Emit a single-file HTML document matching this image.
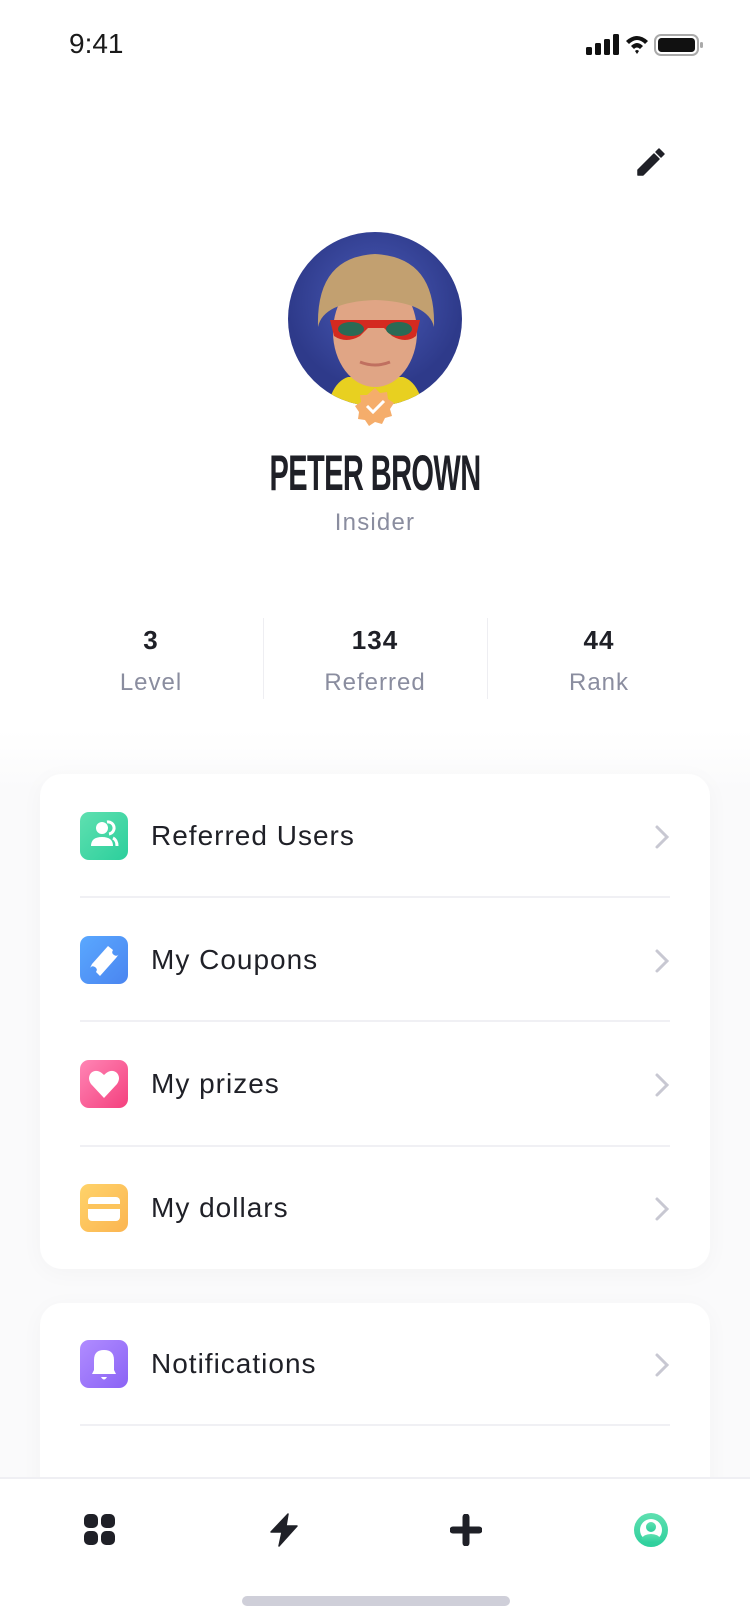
<!DOCTYPE html>
<html><head><meta charset="utf-8"><style>
*{margin:0;padding:0;box-sizing:border-box}
body{width:750px;height:1624px;overflow:hidden;position:relative;background:#fff;font-family:"Liberation Sans",sans-serif;color:#1f2027}
.abs{position:absolute}
.bg2{left:0;top:730px;width:750px;height:894px;background:linear-gradient(#fff,#fafafb 60px)}
.card{position:absolute;left:40px;width:670px;background:#fff;border-radius:22px;box-shadow:0 4px 24px rgba(0,0,0,0.03)}
.row{position:absolute;left:40px;width:670px;height:124px}
.ic{position:absolute;left:40px;top:38px;width:48px;height:48px;border-radius:9px}
.lbl{position:absolute;left:111px;top:0;line-height:124px;font-size:28px;letter-spacing:1px;color:#1f2027}
.chev{position:absolute;left:614px;top:50px}
.sep{position:absolute;left:80px;width:590px;height:2px;background:#f0f0f4}
.stat{position:absolute;width:200px;text-align:center}
.num{font-size:26px;font-weight:bold;top:625px;letter-spacing:1px}
.sl{font-size:24px;color:#8a8d9f;top:669px;letter-spacing:1px}
.vd{position:absolute;top:618px;width:1px;height:81px;background:#eeeef2}
</style></head><body>
<div class="abs bg2"></div>

<div class="abs" style="left:69px;top:28px;font-size:28px;color:#1a1a1a">9:41</div>
<svg class="abs" style="left:586px;top:33px" width="134" height="24" viewBox="0 0 134 24">
<rect x="0" y="14" width="6" height="8" rx="1.5" fill="#111"/><rect x="9" y="10" width="6" height="12" rx="1.5" fill="#111"/><rect x="18" y="6" width="6" height="16" rx="1.5" fill="#111"/><rect x="27" y="1" width="6" height="21" rx="1.5" fill="#111"/>
<path d="M40 8 Q51 -2 62 8 L59 11 Q51 3 43 11Z M45 13 Q51 7 57 13 L54 16 Q51 13 48 16Z M49 18 L51 21 L53 18 Q51 16 49 18Z" fill="#111"/>
<rect x="69" y="2" width="43" height="20" rx="6" fill="none" stroke="#aaa" stroke-width="2"/><rect x="72" y="5" width="37" height="14" rx="3.5" fill="#111"/><rect x="114" y="9" width="3" height="6" rx="1.5" fill="#aaa"/>
</svg>

<svg class="abs" style="left:634px;top:146px" width="32" height="32" viewBox="0 0 32 32"><path d="M4 24 L20 8 L25 13 L9 29 L4 29Z M22 6 L25 3 L30 8 L27 11Z" fill="#1f2027" stroke="#1f2027" stroke-width="1.5" stroke-linejoin="round"/></svg>

<svg class="abs" style="left:288px;top:232px" width="174" height="200" viewBox="0 0 174 200">
<defs><clipPath id="c"><circle cx="87" cy="87" r="87"/></clipPath><radialGradient id="bg" cx="50%" cy="40%"><stop offset="0" stop-color="#4a5bb8"/><stop offset="1" stop-color="#2e3a8a"/></radialGradient></defs>
<g clip-path="url(#c)">
<rect width="174" height="174" fill="url(#bg)"/>
<path d="M40 174 Q45 150 60 145 L115 145 Q130 150 135 174Z" fill="#e8d020"/>
<ellipse cx="87" cy="100" rx="42" ry="55" fill="#e0a585"/>
<path d="M30 95 Q28 25 87 22 Q148 25 146 95 Q140 70 87 68 Q35 70 30 95Z" fill="#c2a070"/>
<path d="M42 88 L132 88 L128 104 Q118 112 104 104 L96 96 L80 96 L72 104 Q58 112 46 104Z" fill="#d42a20"/>
<ellipse cx="63" cy="97" rx="13" ry="7" fill="#2a6a55"/><ellipse cx="111" cy="97" rx="13" ry="7" fill="#2a6a55"/>
<path d="M72 130 Q87 136 102 130" stroke="#c07060" stroke-width="3" fill="none"/>
</g>
<path d="M87 156 l5 5 7-1 1 7 6 4-4 6 2 7-7 2-3 6-7-2-6 4-4-6-7-1 1-7-4-6 6-4-1-7 7 0Z" fill="#f5ad6b"/>
<path d="M79 174 l6 6 11-11" stroke="#fff" stroke-width="3" fill="none"/>
</svg>

<div class="abs" style="left:0;width:750px;top:444px;text-align:center;font-size:50px;font-weight:bold;letter-spacing:-1px"><span style="display:inline-block;transform:scaleX(0.58)">PETER BROWN</span></div>
<div class="abs" style="left:0;width:750px;top:509px;text-align:center;font-size:24px;letter-spacing:1.2px;color:#8a8d9f">Insider</div>

<div class="stat num" style="left:51px">3</div><div class="stat sl" style="left:51px">Level</div>
<div class="stat num" style="left:275px">134</div><div class="stat sl" style="left:275px">Referred</div>
<div class="stat num" style="left:499px">44</div><div class="stat sl" style="left:499px">Rank</div>
<div class="vd" style="left:263px"></div><div class="vd" style="left:487px"></div>

<div class="card" style="top:774px;height:495px"></div>
<div class="card" style="top:1303px;height:300px"></div>

<div class="row" style="top:774px"><div class="ic" style="background:linear-gradient(135deg,#5fe0b0,#2ccf9c)"><svg width="48" height="48" viewBox="0 0 48 48"><circle cx="22" cy="16" r="6" fill="#fff"/><path d="M11 34 Q11 25 22 25 Q33 25 33 34Z" fill="#fff"/><path d="M27 10 A6 6 0 0 1 29 22 M33 26 Q37 28 37 34" stroke="#fff" stroke-width="3" fill="none"/></svg></div><div class="lbl">Referred Users</div><svg class="chev" width="16" height="26"><path d="M3 3 L13 13 L3 23" stroke="#c8c8d2" stroke-width="3" fill="none" stroke-linecap="round"/></svg></div>
<div class="sep" style="top:896px"></div>
<div class="row" style="top:898px"><div class="ic" style="background:linear-gradient(135deg,#5aa8ff,#4a85f0)"><svg width="48" height="48" viewBox="0 0 48 48"><path d="M12 28 L28 10 L33 14 Q31 17 34 19 Q37 21 39 18 L36 22 L20 40 L16 36 Q18 33 15 31 Q12 29 10 32Z" fill="#fff"/></svg></div><div class="lbl">My Coupons</div><svg class="chev" width="16" height="26"><path d="M3 3 L13 13 L3 23" stroke="#c8c8d2" stroke-width="3" fill="none" stroke-linecap="round"/></svg></div>
<div class="sep" style="top:1020px"></div>
<div class="row" style="top:1022px"><div class="ic" style="background:linear-gradient(135deg,#ff85b5,#f4407e)"><svg width="48" height="48" viewBox="0 0 48 48"><path d="M24 38 L11 24 Q7 18 11 13 Q17 8 24 15 Q31 8 37 13 Q41 18 37 24Z" fill="#fff"/></svg></div><div class="lbl">My prizes</div><svg class="chev" width="16" height="26"><path d="M3 3 L13 13 L3 23" stroke="#c8c8d2" stroke-width="3" fill="none" stroke-linecap="round"/></svg></div>
<div class="sep" style="top:1145px"></div>
<div class="row" style="top:1146px"><div class="ic" style="background:linear-gradient(135deg,#ffd36a,#fbb551)"><svg width="48" height="48" viewBox="0 0 48 48"><rect x="8" y="13" width="32" height="24" rx="4" fill="#fff"/><rect x="8" y="20" width="32" height="5" fill="#fcc45c"/></svg></div><div class="lbl">My dollars</div><svg class="chev" width="16" height="26"><path d="M3 3 L13 13 L3 23" stroke="#c8c8d2" stroke-width="3" fill="none" stroke-linecap="round"/></svg></div>

<div class="row" style="top:1302px"><div class="ic" style="background:linear-gradient(135deg,#b08cff,#8b63f5)"><svg width="48" height="48" viewBox="0 0 48 48"><path d="M12 34 L14 30 L14 20 Q14 10 24 10 Q34 10 34 20 L34 30 L36 34Z" fill="#fff"/><path d="M21 37 L27 37 Q24 42 21 37Z" fill="#fff"/></svg></div><div class="lbl">Notifications</div><svg class="chev" width="16" height="26"><path d="M3 3 L13 13 L3 23" stroke="#c8c8d2" stroke-width="3" fill="none" stroke-linecap="round"/></svg></div>
<div class="sep" style="top:1424px"></div>

<div class="abs" style="left:0;top:1477px;width:750px;height:147px;background:#fff;border-top:2px solid #efeff3"></div>
<svg class="abs" style="left:84px;top:1514px" width="32" height="32" viewBox="0 0 32 32"><rect x="0" y="0" width="14" height="14" rx="5" fill="#1f2027"/><rect x="17" y="0" width="14" height="14" rx="5" fill="#1f2027"/><rect x="0" y="17" width="14" height="14" rx="5" fill="#1f2027"/><rect x="17" y="17" width="14" height="14" rx="5" fill="#1f2027"/></svg>
<svg class="abs" style="left:268px;top:1513px" width="32" height="34" viewBox="0 0 32 34"><path d="M20 1 L3 19 L14 19 L11 33 L29 13 L18 13Z" fill="#1f2027" stroke="#1f2027" stroke-width="1.5" stroke-linejoin="round"/></svg>
<svg class="abs" style="left:450px;top:1514px" width="32" height="32" viewBox="0 0 32 32"><path d="M16 3 V29 M3 16 H29" stroke="#1f2027" stroke-width="7" stroke-linecap="round"/></svg>
<svg class="abs" style="left:634px;top:1513px" width="34" height="34" viewBox="0 0 34 34"><defs><linearGradient id="g" x1="0" y1="0" x2="0" y2="1"><stop offset="0" stop-color="#5fe0b0"/><stop offset="1" stop-color="#2ccf9c"/></linearGradient></defs><circle cx="17" cy="17" r="17" fill="url(#g)"/><circle cx="17" cy="17" r="11" fill="#fff"/><circle cx="17" cy="14" r="5" fill="url(#g)"/><path d="M7 26 Q10 21 17 21 Q24 21 27 26 Q22 30 17 30 Q12 30 7 26Z" fill="url(#g)"/></svg>
<div class="abs" style="left:242px;top:1596px;width:268px;height:10px;border-radius:5px;background:#cfcfd9"></div>
</body></html>
